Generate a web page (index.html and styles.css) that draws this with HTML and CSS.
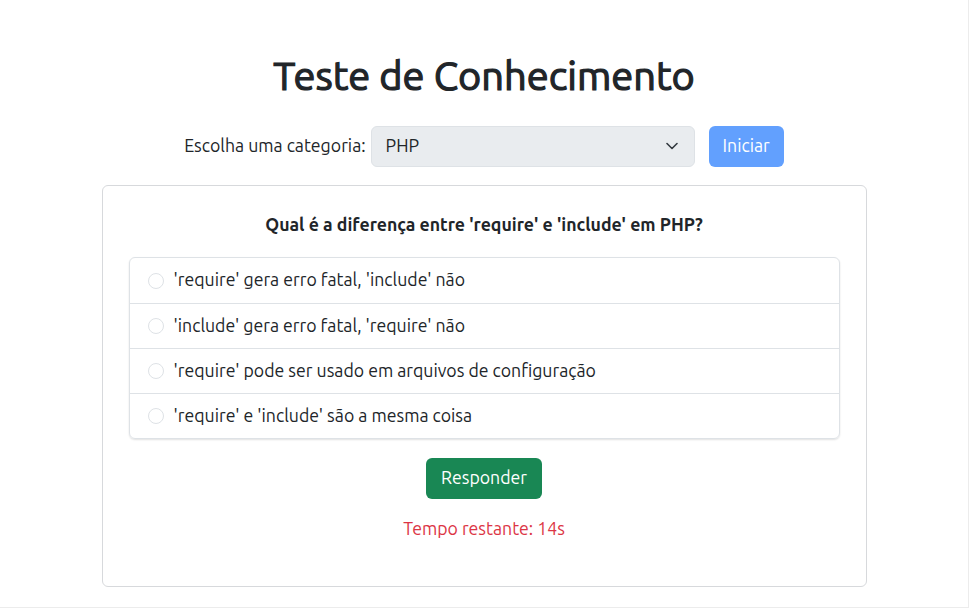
FILE: index.html
```html
<!DOCTYPE html>
<html lang="pt-BR">
<head>
<meta charset="utf-8">
<title>Teste de Conhecimento</title>
<link rel="stylesheet" href="styles.css">
</head>
<body>
<div class="page">
  <h1 class="title">Teste de Conhecimento</h1>
  <div class="controls">
    <label class="label" for="cat">Escolha uma categoria:</label>
    <div class="select">
      <span>PHP</span>
      <svg class="chev" width="12" height="8" viewBox="0 0 12 8"><path d="M1 1.5l5 5 5-5" fill="none" stroke="#343a40" stroke-width="1.6" stroke-linecap="round" stroke-linejoin="round"/></svg>
    </div>
    <button class="btn btn-start" disabled>Iniciar</button>
  </div>
  <div class="card">
    <p class="question">Qual é a diferença entre 'require' e 'include' em PHP?</p>
    <ul class="options">
      <li class="option"><span class="radio"></span>'require' gera erro fatal, 'include' não</li>
      <li class="option"><span class="radio"></span>'include' gera erro fatal, 'require' não</li>
      <li class="option"><span class="radio"></span>'require' pode ser usado em arquivos de configuração</li>
      <li class="option"><span class="radio"></span>'require' e 'include' são a mesma coisa</li>
    </ul>
    <div class="actions">
      <button class="btn btn-answer">Responder</button>
      <p class="timer">Tempo restante: 14s</p>
    </div>
  </div>
</div>
</body>
</html>
```
FILE: styles.css
```css
* { box-sizing: border-box; }
html, body { margin: 0; padding: 0; }
body {
  background: #fff;
  color: #212529;
  font-family: Ubuntu, "Open Sans", "Noto Sans", sans-serif;
  font-size: 17.7px;
  line-height: 1.5;
  min-height: 608px;
  border-right: 1px solid #ececec;
  border-bottom: 1px solid #ececec;
}
.page {
  width: 765px;
  margin: 0 auto;
  padding-top: 52px;
}
.title {
  margin: 0 0 26px;
  height: 47px;
  font-size: 39.8px;
  font-weight: 400;
  -webkit-text-stroke: 1.2px #212529;
  line-height: 47px;
  text-align: center;
}
.controls {
  display: flex;
  align-items: center;
  justify-content: center;
  margin-bottom: 18px;
}
.label { margin-right: 5px; }
.select {
  width: 324px;
  height: 41px;
  display: flex;
  align-items: center;
  justify-content: space-between;
  padding: 0 16px 0 14px;
  background: #e9ecef;
  border: 1px solid #dee2e6;
  border-radius: 6px;
  margin-right: 14px;
}
.btn {
  font-family: inherit;
  font-size: 17.7px;
  line-height: 1.5;
  border: 1px solid transparent;
  border-radius: 6px;
  padding: 0 13px;
  color: #fff;
  height: 41px;
}
.btn-start {
  background: #62a0fe;
  margin-top: 1px;
}
.card {
  border: 1px solid #d7d9dc;
  border-radius: 6px;
  padding: 26px;
  height: 402px;
}
.question {
  margin: 0 0 19px;
  line-height: 26px;
  text-align: center;
  font-weight: 700;
}
.options {
  list-style: none;
  margin: 0;
  padding: 0;
  border: 1px solid #dee2e6;
  border-radius: 6px;
  box-shadow: 0 1px 2px rgba(0,0,0,.12);
}
.option {
  display: flex;
  align-items: center;
  height: 45px;
  padding-left: 18px;
}
.option + .option { border-top: 1px solid #dee2e6; }
.radio {
  width: 16px;
  height: 16px;
  border: 1px solid #dee2e6;
  border-radius: 50%;
  margin-right: 10px;
  flex: none;
}
.actions {
  display: flex;
  flex-direction: column;
  align-items: center;
  padding-top: 19px;
}
.btn-answer {
  background: #198754;
  padding: 0 14px;
}
.timer {
  margin: 17px 0 0;
  line-height: 26px;
  color: #dc3545;
}
```
